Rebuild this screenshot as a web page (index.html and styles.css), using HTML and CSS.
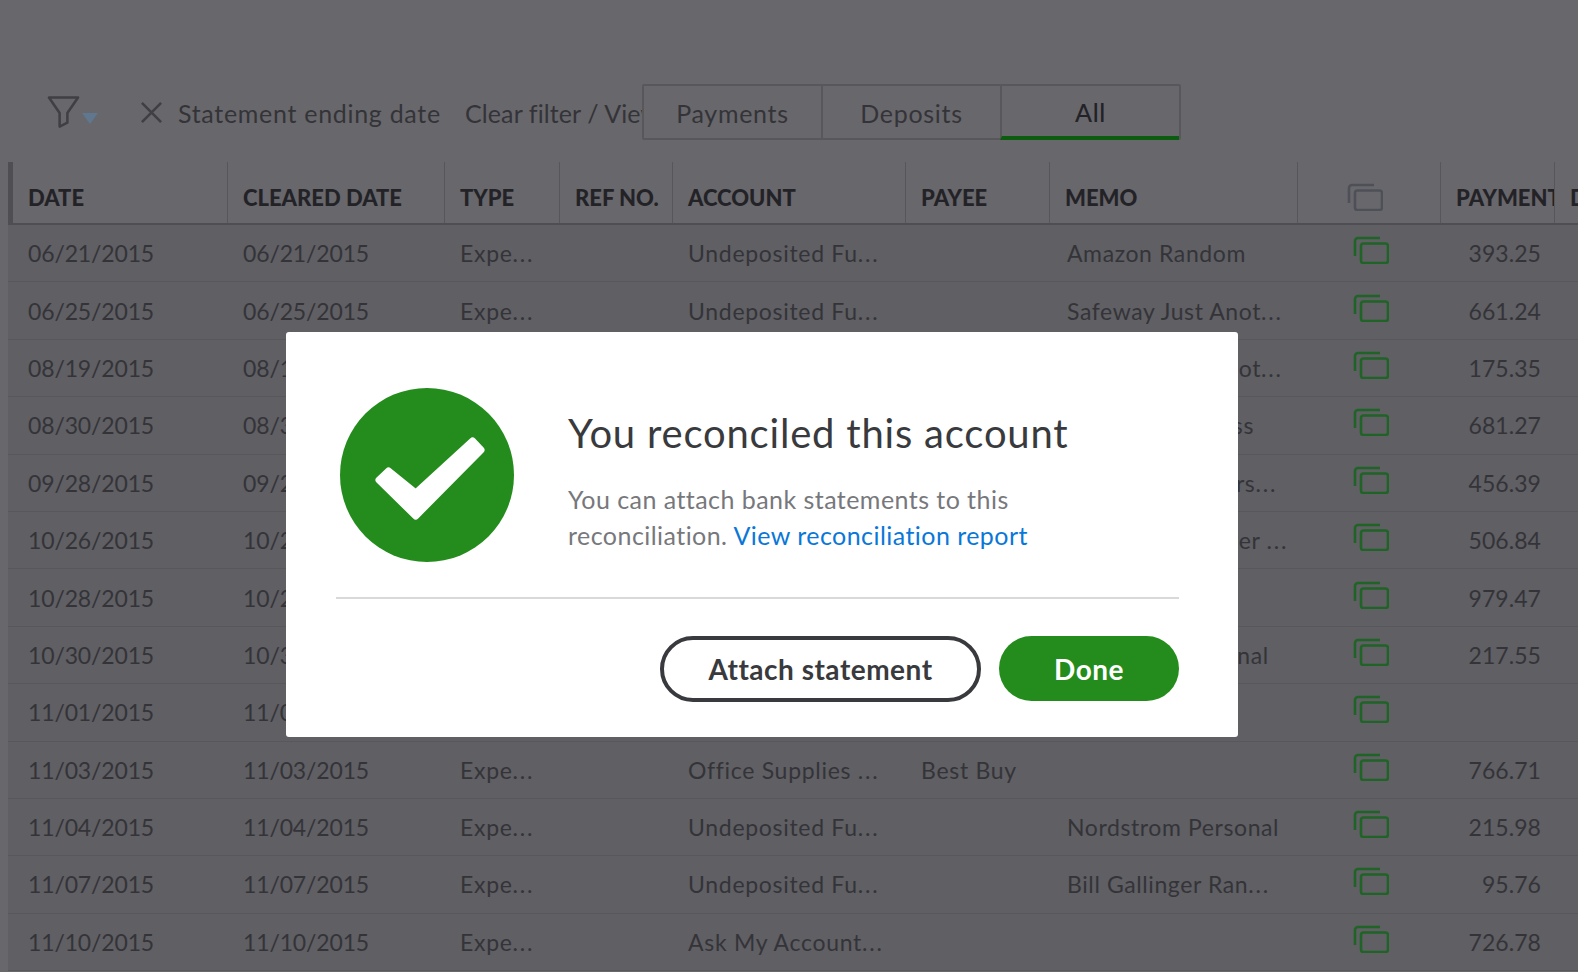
FILE: index.html
```html
<!DOCTYPE html>
<html lang="en">

<head>
    <meta charset="UTF-8">
    <meta name="viewport" content="width=device-width, initial-scale=1.0">
    <title>Reconcile</title>
    <link rel="stylesheet" href="styles.css">
</head>

<body>
    <svg class="defs" width="0" height="0">
        <symbol id="copy" viewBox="0 0 36 28">
            <rect x="8" y="7.5" width="27" height="19.5" rx="2.5" fill="none" stroke="currentColor" stroke-width="2.6"></rect>
            <path d="M2 20V5a3 3 0 0 1 3-3h22" fill="none" stroke="currentColor" stroke-width="2.6"></path>
        </symbol>
    </svg>

    <div class="toolbar">
        <div class="filter-btn">
            <svg class="funnel" viewBox="0 0 34 34">
                <path d="M2 2h30L21 18v10l-8 4V18z" fill="none" stroke="#3f3f44" stroke-width="2.6" stroke-linejoin="round"></path>
            </svg>
            <span class="caret"></span>
        </div>
        <svg class="close-x" viewBox="0 0 24 24">
            <path d="M2 2l20 20M22 2L2 22" fill="none" stroke="#3f3f44" stroke-width="2.7"></path>
        </svg>
        <span class="filter-label">Statement ending date</span>
        <span class="clear-link">Clear filter / View All</span>
        <div class="tabs">
            <div class="tab">Payments</div>
            <div class="tab">Deposits</div>
            <div class="tab active">All</div>
        </div>
    </div>

    <div class="table">
        <div class="row head">
            <div class="cell">DATE</div>
            <div class="cell">CLEARED DATE</div>
            <div class="cell">TYPE</div>
            <div class="cell">REF NO.</div>
            <div class="cell">ACCOUNT</div>
            <div class="cell">PAYEE</div>
            <div class="cell">MEMO</div>
            <div class="cell icon-cell"><svg class="copy-icon"><use href="#copy"></use></svg></div>
            <div class="cell">PAYMENT</div>
            <div class="cell">DEPOSIT</div>
        </div>

        <div class="row">
            <div class="cell num">06/21/2015</div>
            <div class="cell num">06/21/2015</div>
            <div class="cell">Expe<span class="dots">...</span></div>
            <div class="cell"></div>
            <div class="cell">Undeposited Fu<span class="dots">...</span></div>
            <div class="cell"></div>
            <div class="cell memo">Amazon Random</div>
            <div class="cell icon-cell"><svg class="copy-icon"><use href="#copy"></use></svg></div>
            <div class="cell amount">393.25</div>
            <div class="cell"></div>
        </div>
        <div class="row">
            <div class="cell num">06/25/2015</div>
            <div class="cell num">06/25/2015</div>
            <div class="cell">Expe<span class="dots">...</span></div>
            <div class="cell"></div>
            <div class="cell">Undeposited Fu<span class="dots">...</span></div>
            <div class="cell"></div>
            <div class="cell memo">Safeway Just Anot<span class="dots">...</span></div>
            <div class="cell icon-cell"><svg class="copy-icon"><use href="#copy"></use></svg></div>
            <div class="cell amount">661.24</div>
            <div class="cell"></div>
        </div>
        <div class="row">
            <div class="cell num">08/19/2015</div>
            <div class="cell num">08/19/2015</div>
            <div class="cell">Expe<span class="dots">...</span></div>
            <div class="cell"></div>
            <div class="cell">Undeposited Fu<span class="dots">...</span></div>
            <div class="cell"></div>
            <div class="cell memo">Safeway Just Anot<span class="dots">...</span></div>
            <div class="cell icon-cell"><svg class="copy-icon"><use href="#copy"></use></svg></div>
            <div class="cell amount">175.35</div>
            <div class="cell"></div>
        </div>
        <div class="row">
            <div class="cell num">08/30/2015</div>
            <div class="cell num">08/30/2015</div>
            <div class="cell">Expe<span class="dots">...</span></div>
            <div class="cell"></div>
            <div class="cell">Undeposited Fu<span class="dots">...</span></div>
            <div class="cell"></div>
            <div class="cell memo">Safeway Business</div>
            <div class="cell icon-cell"><svg class="copy-icon"><use href="#copy"></use></svg></div>
            <div class="cell amount">681.27</div>
            <div class="cell"></div>
        </div>
        <div class="row">
            <div class="cell num">09/28/2015</div>
            <div class="cell num">09/28/2015</div>
            <div class="cell">Expe<span class="dots">...</span></div>
            <div class="cell"></div>
            <div class="cell">Undeposited Fu<span class="dots">...</span></div>
            <div class="cell"></div>
            <div class="cell memo">Bill Gallinger Cars<span class="dots">...</span></div>
            <div class="cell icon-cell"><svg class="copy-icon"><use href="#copy"></use></svg></div>
            <div class="cell amount">456.39</div>
            <div class="cell"></div>
        </div>
        <div class="row">
            <div class="cell num">10/26/2015</div>
            <div class="cell num">10/26/2015</div>
            <div class="cell">Expe<span class="dots">...</span></div>
            <div class="cell"></div>
            <div class="cell">Undeposited Fu<span class="dots">...</span></div>
            <div class="cell"></div>
            <div class="cell memo">Nordstrom Grocer <span class="dots">...</span></div>
            <div class="cell icon-cell"><svg class="copy-icon"><use href="#copy"></use></svg></div>
            <div class="cell amount">506.84</div>
            <div class="cell"></div>
        </div>
        <div class="row">
            <div class="cell num">10/28/2015</div>
            <div class="cell num">10/28/2015</div>
            <div class="cell">Expe<span class="dots">...</span></div>
            <div class="cell"></div>
            <div class="cell">Undeposited Fu<span class="dots">...</span></div>
            <div class="cell"></div>
            <div class="cell memo"></div>
            <div class="cell icon-cell"><svg class="copy-icon"><use href="#copy"></use></svg></div>
            <div class="cell amount">979.47</div>
            <div class="cell"></div>
        </div>
        <div class="row">
            <div class="cell num">10/30/2015</div>
            <div class="cell num">10/30/2015</div>
            <div class="cell">Expe<span class="dots">...</span></div>
            <div class="cell"></div>
            <div class="cell">Undeposited Fu<span class="dots">...</span></div>
            <div class="cell"></div>
            <div class="cell memo">Safeway's Personal</div>
            <div class="cell icon-cell"><svg class="copy-icon"><use href="#copy"></use></svg></div>
            <div class="cell amount">217.55</div>
            <div class="cell"></div>
        </div>
        <div class="row">
            <div class="cell num">11/01/2015</div>
            <div class="cell num">11/01/2015</div>
            <div class="cell">Expe<span class="dots">...</span></div>
            <div class="cell"></div>
            <div class="cell">Undeposited Fu<span class="dots">...</span></div>
            <div class="cell"></div>
            <div class="cell memo"></div>
            <div class="cell icon-cell"><svg class="copy-icon"><use href="#copy"></use></svg></div>
            <div class="cell amount"></div>
            <div class="cell"></div>
        </div>
        <div class="row">
            <div class="cell num">11/03/2015</div>
            <div class="cell num">11/03/2015</div>
            <div class="cell">Expe<span class="dots">...</span></div>
            <div class="cell"></div>
            <div class="cell">Office Supplies <span class="dots">...</span></div>
            <div class="cell">Best Buy</div>
            <div class="cell memo"></div>
            <div class="cell icon-cell"><svg class="copy-icon"><use href="#copy"></use></svg></div>
            <div class="cell amount">766.71</div>
            <div class="cell"></div>
        </div>
        <div class="row">
            <div class="cell num">11/04/2015</div>
            <div class="cell num">11/04/2015</div>
            <div class="cell">Expe<span class="dots">...</span></div>
            <div class="cell"></div>
            <div class="cell">Undeposited Fu<span class="dots">...</span></div>
            <div class="cell"></div>
            <div class="cell memo">Nordstrom Personal</div>
            <div class="cell icon-cell"><svg class="copy-icon"><use href="#copy"></use></svg></div>
            <div class="cell amount">215.98</div>
            <div class="cell"></div>
        </div>
        <div class="row">
            <div class="cell num">11/07/2015</div>
            <div class="cell num">11/07/2015</div>
            <div class="cell">Expe<span class="dots">...</span></div>
            <div class="cell"></div>
            <div class="cell">Undeposited Fu<span class="dots">...</span></div>
            <div class="cell"></div>
            <div class="cell memo">Bill Gallinger Ran<span class="dots">...</span></div>
            <div class="cell icon-cell"><svg class="copy-icon"><use href="#copy"></use></svg></div>
            <div class="cell amount">95.76</div>
            <div class="cell"></div>
        </div>
        <div class="row">
            <div class="cell num">11/10/2015</div>
            <div class="cell num">11/10/2015</div>
            <div class="cell">Expe<span class="dots">...</span></div>
            <div class="cell"></div>
            <div class="cell">Ask My Account<span class="dots">...</span></div>
            <div class="cell"></div>
            <div class="cell memo"></div>
            <div class="cell icon-cell"><svg class="copy-icon"><use href="#copy"></use></svg></div>
            <div class="cell amount">726.78</div>
            <div class="cell"></div>
        </div>
    </div>

    <div class="modal">
        <div class="modal-top">
            <svg class="check" viewBox="0 0 174 174">
                <circle cx="87" cy="87" r="87" fill="#248c1d"></circle>
                <polygon points="39,92 48.5,83 75.7,105 132.5,53 141,62 75.7,128" fill="#fff" stroke="#fff" stroke-width="7" stroke-linejoin="round"></polygon>
            </svg>
            <div class="modal-text">
                <h1>You reconciled this account</h1>
                <p>You can attach bank statements to this reconciliation. <a href="#">View reconciliation report</a></p>
            </div>
        </div>
        <div class="modal-actions">
            <button class="btn outline">Attach statement</button>
            <button class="btn primary">Done</button>
        </div>
    </div>
</body>

</html>
```

FILE: styles.css
```css
* {
    margin: 0;
    padding: 0;
    box-sizing: border-box;
}

html,
body {
    height: 100%;
    overflow: hidden;
}

body {
    background-color: #68676c;
    color: #343438;
    font-family: "Lato", "Open Sans", sans-serif;
    padding-top: 84px;
    position: relative;
}

.defs {
    position: absolute;
}

.toolbar {
    display: flex;
    align-items: center;
    height: 56px;
    padding-left: 47px;
    font-size: 25px;
    letter-spacing: 0.7px;
}

.filter-btn {
    display: flex;
    align-items: flex-end;
    width: 93px;
    height: 34px;
}

.funnel {
    width: 33px;
    height: 34px;
}

.caret {
    width: 16px;
    height: 11px;
    margin: 0 0 5px 2px;
    border: 8px solid transparent;
    border-top: 11px solid #5f7890;
    border-bottom: 0;
}

.close-x {
    width: 23px;
    height: 23px;
    margin-right: 15px;
}

.filter-label {
    width: 287px;
    padding-top: 2px;
    white-space: nowrap;
}

.clear-link {
    width: 177px;
    padding-top: 2px;
    letter-spacing: 0.1px;
    white-space: nowrap;
    overflow: hidden;
}

.tabs {
    display: flex;
    width: 539px;
    height: 56px;
    border: 2px solid #58585c;
    border-radius: 2px;
}

.tab {
    flex: 1;
    display: flex;
    align-items: center;
    justify-content: center;
    padding-top: 2px;
    border-left: 2px solid #58585c;
}

.tab:first-child {
    border-left: 0;
}

.tab.active {
    color: #232327;
    border-bottom: 4px solid #0b5c0f;
    margin-bottom: -2px;
    font-weight: 500;
}

.table {
    margin: 22px 0 0 8px;
    width: 1600px;
}

.row {
    display: grid;
    grid-template-columns: 215px 217px 115px 113px 233px 144px 248px 143px 114px 58px;
    height: 57.4px;
    align-items: center;
    background: #5f5f64;
    border-bottom: 1px solid #58585c;
    font-size: 23px;
    letter-spacing: 0.7px;
}

.row.head {
    height: 63px;
    background: #68676c;
    border-bottom: 2px solid #4f4f53;
    border-left: 5px solid #4f4f53;
    color: #232327;
    font-size: 22px;
    font-weight: 900;
    letter-spacing: 0;
}

.cell {
    padding-left: 20px;
    white-space: nowrap;
    overflow: hidden;
}

.dots {
    letter-spacing: 1.8px;
}

.num {
    letter-spacing: -0.15px;
}

.row.head .cell {
    padding: 10px 0 0 15px;
    height: 100%;
    display: flex;
    align-items: center;
    border-right: 1px solid #57575b;
}

.memo {
    padding-left: 22px;
    letter-spacing: 0.6px;
}

.icon-cell {
    padding-left: 60px;
    overflow: visible;
    display: flex;
}

.row.head .icon-cell {
    padding: 8px 0 0 49px;
}

.copy-icon {
    width: 36px;
    height: 28px;
    color: #1f6426;
    margin-bottom: 6px;
}

.row.head .copy-icon {
    color: #4e5058;
    margin-bottom: 0;
}

.amount {
    padding: 0 9px 0 0;
    text-align: right;
    letter-spacing: 0.05px;
}

.modal {
    position: absolute;
    left: 286px;
    top: 332px;
    width: 952px;
    height: 405px;
    padding: 56px 59px 0 50px;
    background: #fff;
    border-radius: 3px;
}

.modal-top {
    display: flex;
    height: 211px;
    padding-left: 4px;
    border-bottom: 2px solid #d9d9dc;
}

.check {
    width: 174px;
    height: 174px;
    flex-shrink: 0;
}

.modal-text {
    margin: 20px 0 0 54px;
}

.modal-text h1 {
    font-size: 40px;
    font-weight: 400;
    letter-spacing: 0.8px;
    color: #393a3d;
    line-height: 50px;
    white-space: nowrap;
}

.modal-text p {
    margin-top: 23px;
    width: 480px;
    font-size: 25px;
    line-height: 36px;
    letter-spacing: 0.45px;
    color: #77787c;
}

.modal-text a {
    color: #0a77d8;
    text-decoration: none;
}

.modal-actions {
    display: flex;
    justify-content: flex-end;
    gap: 18px;
    margin-top: 37px;
}

.btn {
    height: 66px;
    border-radius: 33px;
    font-family: inherit;
    font-size: 28px;
    font-weight: 700;
    letter-spacing: 0.5px;
    cursor: pointer;
}

.btn.outline {
    width: 321px;
    background: #fff;
    border: 4px solid #393a3d;
    color: #393a3d;
}

.btn.primary {
    width: 180px;
    height: 65px;
    background: #248c1d;
    border: 0;
    color: #fff;
}
```
